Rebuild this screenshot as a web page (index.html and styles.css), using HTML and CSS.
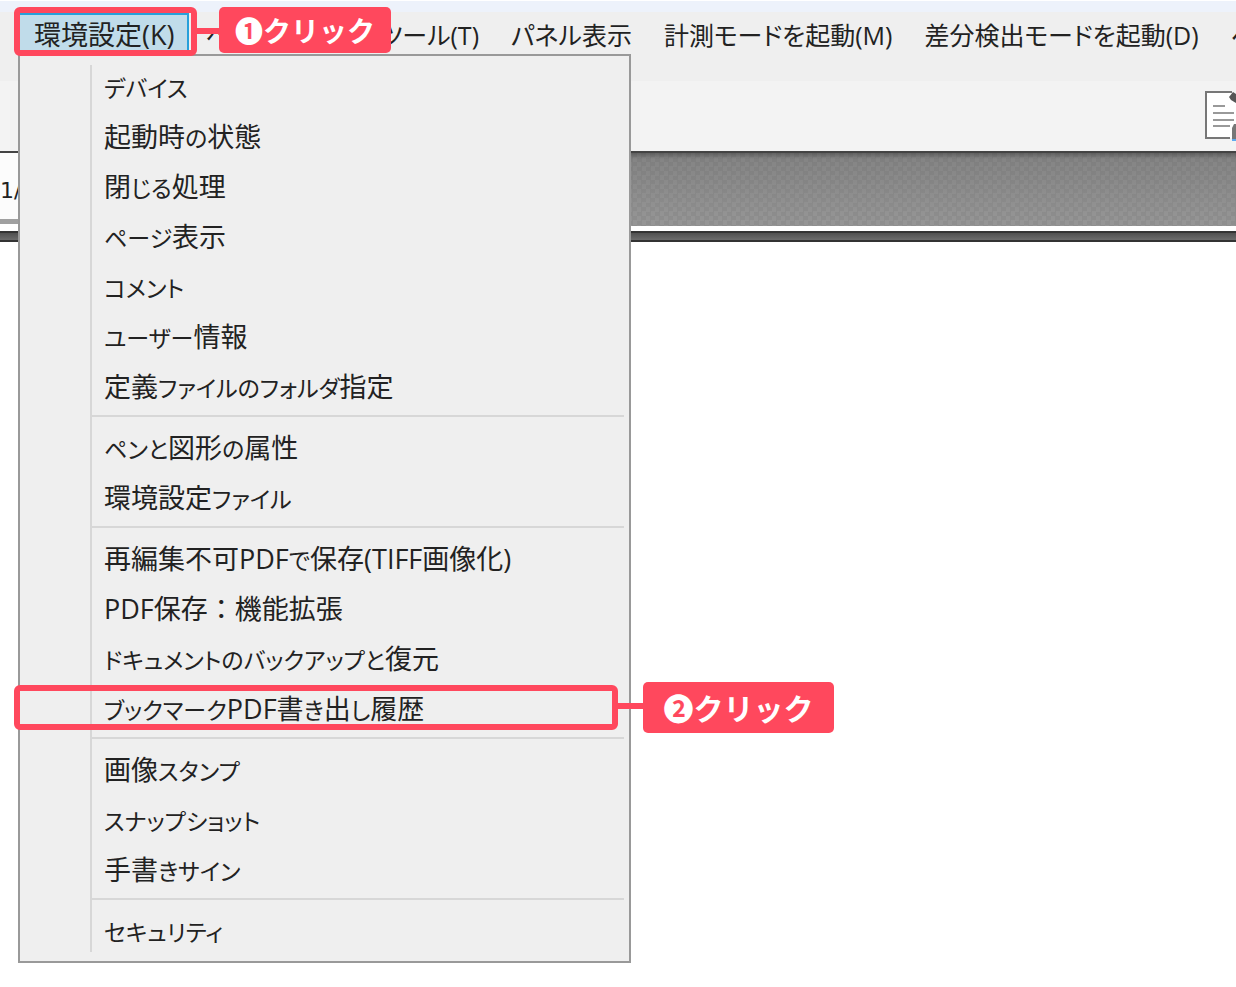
FILE: index.html
```html
<!DOCTYPE html>
<html lang="ja">
<head>
    <meta charset="UTF-8">
    <title>環境設定</title>
    <link rel="stylesheet" href="styles.css">
</head>
<body>
<div class="app">
    <div class="title-strip"></div>
    <nav class="menu-bar">
        <div class="menu-entry">
            <button class="menu-btn open">環境設定(K)</button>
            <div class="mark mark-menu"></div>
            <div class="callout callout-menu">❶クリック</div>
            <ul class="dropdown">
                <li><button class="menu-item"><span class="kana">デバイス</span></button></li>
                <li><button class="menu-item">起動時<span class="kana">の</span>状態</button></li>
                <li><button class="menu-item">閉<span class="kana">じる</span>処理</button></li>
                <li><button class="menu-item"><span class="kana">ページ</span>表示</button></li>
                <li><button class="menu-item"><span class="kana">コメント</span></button></li>
                <li><button class="menu-item"><span class="kana">ユーザー</span>情報</button></li>
                <li><button class="menu-item">定義<span class="kana">ファイルのフォルダ</span>指定</button></li>
                <li class="separator"></li>
                <li><button class="menu-item"><span class="kana">ペンと</span>図形<span class="kana">の</span>属性</button></li>
                <li><button class="menu-item">環境設定<span class="kana">ファイル</span></button></li>
                <li class="separator"></li>
                <li><button class="menu-item">再編集不可PDF<span class="kana">で</span>保存(TIFF画像化)</button></li>
                <li><button class="menu-item full">PDF保存：機能拡張</button></li>
                <li><button class="menu-item"><span class="kana">ドキュメントのバックアップと</span>復元</button></li>
                <li class="marked">
                    <button class="menu-item"><span class="kana">ブックマーク</span>PDF書<span class="kana">き</span>出<span class="kana">し</span>履歴</button>
                    <div class="mark mark-item"></div>
                    <div class="callout callout-item">❷クリック</div>
                </li>
                <li class="separator"></li>
                <li><button class="menu-item">画像<span class="kana">スタンプ</span></button></li>
                <li><button class="menu-item"><span class="kana">スナップショット</span></button></li>
                <li><button class="menu-item">手書<span class="kana">きサイン</span></button></li>
                <li class="separator"></li>
                <li><button class="menu-item"><span class="kana">セキュリティ</span></button></li>
            </ul>
        </div>
        <button class="menu-btn wide">ペ</button>
        <button class="menu-btn">ツール(T)</button>
        <button class="menu-btn">パネル表示</button>
        <button class="menu-btn">計測モードを起動(M)</button>
        <button class="menu-btn">差分検出モードを起動(D)</button>
        <button class="menu-btn">ヘ</button>
    </nav>
    <div class="tool-bar">
        <svg class="doc-icon" width="32" height="51" viewBox="0 0 32 51">
            <path d="M2 2H27L32 7V48H2Z" fill="#fff"/>
            <path d="M28 2H2V48H26" fill="none" stroke="#777" stroke-width="2"/>
            <path d="M25 7L29 2L32 4V13L27 10Z" fill="#555"/>
            <path d="M9 16H21M9 23H30M9 30H30M9 36H26" stroke="#999" stroke-width="2"/>
            <path d="M28 38L30 34H32V51H28Z" fill="#777"/>
            <path d="M28 49H32V51H28Z" fill="#5eaaf0"/>
        </svg>
    </div>
    <div class="page-band">
        <div class="page-box">1/</div>
        <div class="pattern"></div>
    </div>
    <div class="band-edge"></div>
</div>
</body>
</html>
```

FILE: styles.css
```css
body {
    margin: 0;
    background: #fff;
    color: #222;
    font-family: "Open Sans", "Noto Sans CJK JP", sans-serif;
    font-size: 27px;
    font-feature-settings: "palt";
}
.app {
    min-height: 100vh;
    overflow: hidden;
}
button {
    margin: 0;
    padding: 0;
    border: none;
    background: none;
    color: inherit;
    font: inherit;
    font-feature-settings: inherit;
    white-space: nowrap;
    cursor: pointer;
}
.title-strip {
    height: 11px;
    margin-top: 1px;
    background: #edf2fb;
}
.menu-bar {
    display: flex;
    align-items: flex-start;
    height: 69px;
    padding-left: 19px;
    background: #efefef;
    box-sizing: border-box;
}
.menu-entry {
    position: relative;
    z-index: 10;
}
.menu-btn {
    height: 42px;
    padding: 0 16px;
    font-size: 25px;
    line-height: 46px;
    flex-shrink: 0;
}
.menu-btn.open {
    padding: 0 15px;
    background: #c0dcea;
    box-shadow: inset -2px 3px #26a0da;
    font-size: 27px;
}
.menu-btn.wide {
    width: 174px;
    text-align: left;
}
.dropdown {
    position: absolute;
    top: 42px;
    left: -1px;
    width: 613px;
    margin: 0;
    padding: 6px 5px 5px 72px;
    list-style: none;
    background: #efefef;
    border: 2px solid #999;
    box-sizing: border-box;
}
.dropdown::before {
    content: "";
    position: absolute;
    top: 9px;
    bottom: 9px;
    left: 70px;
    width: 2px;
    background: #d7d7d7;
}
.menu-item {
    display: block;
    width: 100%;
    height: 50px;
    padding-left: 12px;
    line-height: 50px;
    text-align: left;
}
.menu-item.full {
    font-feature-settings: normal;
}
.kana {
    font-size: 23px;
}
.separator {
    height: 2px;
    margin: 3px 0 6px;
    background: #d7d7d7;
}
.marked {
    position: relative;
}

/* click guides */
.mark {
    position: absolute;
    z-index: 2;
    border: 6px solid #ff485d;
    border-radius: 6px;
    box-sizing: border-box;
    pointer-events: none;
}
.mark-menu {
    top: -5px;
    left: -5px;
    width: 183px;
    height: 49px;
}
.mark-item {
    top: 1px;
    left: -78px;
    width: 604px;
    height: 45px;
}
.callout {
    position: absolute;
    z-index: 3;
    border-radius: 5px;
    background: #ff485d;
    color: #fff;
    font-family: "Noto Sans CJK JP", sans-serif;
    font-feature-settings: normal;
    font-weight: bold;
    text-align: center;
    white-space: nowrap;
}
.callout::before {
    content: "";
    position: absolute;
    top: 21px;
    right: 100%;
    width: 25px;
    height: 6px;
    background: #ff485d;
}
.callout-menu {
    top: -5px;
    left: 200px;
    width: 172px;
    font-size: 28px;
    line-height: 46px;
}
.callout-item {
    top: -2px;
    left: 551px;
    width: 191px;
    font-size: 30px;
    line-height: 51px;
}

.tool-bar {
    display: flex;
    justify-content: flex-end;
    height: 72px;
    padding-top: 9px;
    background: #f3f3f3;
    border-bottom: 2px solid #444;
    box-sizing: border-box;
}
.page-band {
    display: flex;
    height: 73px;
}
.page-box {
    width: 160px;
    height: 71px;
    background: #fcfcfc;
    border-bottom: 5px solid #a0a0a0;
    box-sizing: border-box;
    font-family: "DejaVu Sans", sans-serif;
    font-size: 22px;
    line-height: 76px;
}
.pattern {
    flex: 1;
    background:
        linear-gradient(rgba(0, 0, 0, 0.25), rgba(0, 0, 0, 0) 6px),
        repeating-conic-gradient(rgba(0, 0, 0, 0.03) 0 25%, rgba(255, 255, 255, 0.02) 0 50%) 0 0 / 9px 9px,
        linear-gradient(#818181, #949494);
}
.band-edge {
    height: 11px;
    margin-top: 5px;
    border: solid #333;
    border-width: 2px 0;
    background: linear-gradient(#505050, #6b6b6b);
    box-sizing: border-box;
}
```
